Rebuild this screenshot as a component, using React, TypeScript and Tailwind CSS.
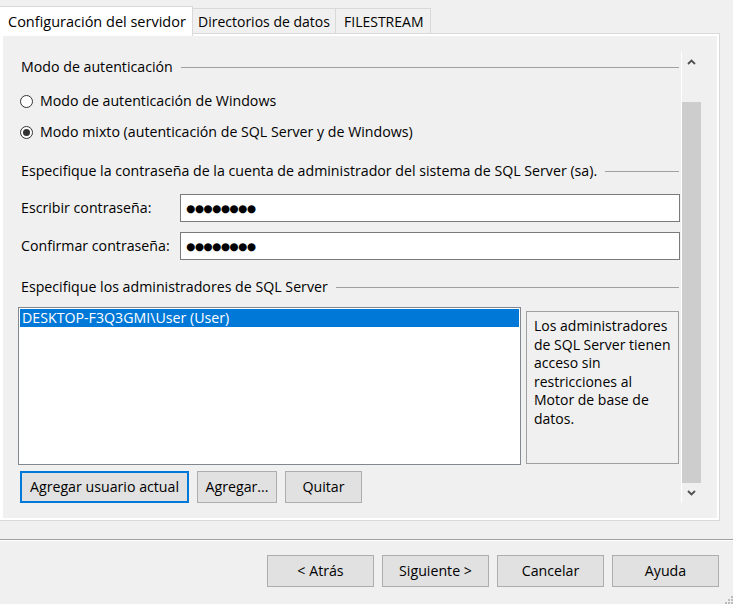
import React from 'react';

const font = { fontFamily: '"Open Sans", "Noto Sans", sans-serif' };

const Radio = ({ checked, label }: { checked?: boolean; label: string }) => (
  <div className="flex items-center h-[20px] ml-[2px]">
    <span className="w-[13px] h-[13px] rounded-full border border-[#333333] bg-white flex items-center justify-center">
      {checked && <span className="w-[7px] h-[7px] rounded-full bg-[#333333]" />}
    </span>
    <span className="ml-[7px]">{label}</span>
  </div>
);

const GroupHeader = ({ text, className = '' }: { text: string; className?: string }) => (
  <div className={`flex items-center h-[20px] ml-[3px] ${className}`}>
    <span className="whitespace-nowrap">{text}</span>
    <span className="flex-1 h-px bg-[#a0a0a0] ml-[8px] mr-[2px]" />
  </div>
);

const PasswordRow = ({ label, className = '' }: { label: string; className?: string }) => (
  <div className={`flex items-center h-[28px] ${className}`}>
    <span className="w-[159px] ml-[3px]">{label}</span>
    <div className="flex-1 h-full mr-[1px] bg-white border border-[#7a7a7a] flex items-center pl-[5px]">
      <span className="text-[10.5px] tracking-[-0.5px] leading-none" style={{ fontFamily: '"DejaVu Sans", sans-serif' }}>
        ●●●●●●●●
      </span>
    </div>
  </div>
);

const Btn = ({ children, focused, className = '' }: { children: React.ReactNode; focused?: boolean; className?: string }) => (
  <button
    className={`h-[32px] bg-[#e1e1e1] flex items-center justify-center text-black ${
      focused ? 'border-2 border-[#0078d7]' : 'border border-[#adadad]'
    } ${className}`}
  >
    {children}
  </button>
);

export default function App() {
  return (
    <div className="w-[733px] h-[604px] bg-[#f0f0f0] text-[14.2px] text-black relative overflow-hidden" style={font}>
      {/* tabs */}
      <div className="flex items-end h-[36px] pt-[6px] relative z-10 text-[14.5px]">
        <div className="h-[30px] w-[193px] bg-white border-t border-r border-[#d9d9d9] flex items-center pl-[8px]">
          Configuración del servidor
        </div>
        <div className="h-[26px] w-[143px] mb-[2px] border-t border-r border-[#d9d9d9] flex items-center pl-[5px] text-[14px]">
          Directorios de datos
        </div>
        <div className="h-[26px] w-[95px] mb-[2px] border-t border-r border-[#d9d9d9] flex items-center pl-[8px] text-[14px]">
          FILESTREAM
        </div>
      </div>

      {/* tab panel */}
      <div className="-mt-[3px] w-[720px] h-[488px] bg-white border-t border-r border-b border-[#d9d9d9] p-[2px] pl-[3px]">
        <div className="h-full bg-[#f0f0f0] pt-[16px] pb-[15px] pr-[16px] flex">
          {/* scroll content */}
          <div className="flex-1 pl-[15px] overflow-hidden flex flex-col">
            <GroupHeader text="Modo de autenticación" className="mt-[5px]" />
            <div className="mt-[14px]">
              <Radio label="Modo de autenticación de Windows" />
            </div>
            <div className="mt-[11px]">
              <Radio checked label="Modo mixto (autenticación de SQL Server y de Windows)" />
            </div>
            <GroupHeader
              text="Especifique la contraseña de la cuenta de administrador del sistema de SQL Server (sa)."
              className="mt-[19px]"
            />
            <PasswordRow label="Escribir contraseña:" className="mt-[13px]" />
            <PasswordRow label="Confirmar contraseña:" className="mt-[10px]" />
            <GroupHeader text="Especifique los administradores de SQL Server" className="mt-[17px]" />

            <div className="flex mt-[10px] h-[158px]">
              <div className="w-[503px] h-full bg-white border border-[#828790] p-[1px]">
                <div className="h-[18px] bg-[#0078d7] text-white flex items-center pl-[2px] leading-none">
                  DESKTOP-F3Q3GMI\User (User)
                </div>
              </div>
              <div className="ml-[5px] mt-[4px] w-[153px] h-[153px] border border-[#a0a0a0] pl-[7px] pr-[6px] pt-[5px] leading-[18.6px] text-[14px]">
                Los administradores de SQL Server tienen acceso sin restricciones al Motor de base de datos.
              </div>
            </div>

            <div className="flex mt-[6px] ml-[2px] gap-[8px]">
              <Btn focused className="w-[169px]">Agregar usuario actual</Btn>
              <Btn className="w-[80px]">Agregar...</Btn>
              <Btn className="w-[77px]">Quitar</Btn>
            </div>
          </div>

          {/* scrollbar */}
          <div className="w-[20px] flex flex-col border-l border-white bg-[#f0f0f0]">
            <div className="h-[20px] flex items-center justify-center">
              <svg width="9" height="6" viewBox="0 0 9 6">
                <path d="M1 5 L4.5 1.5 L8 5" stroke="#505050" strokeWidth="1.8" fill="none" />
              </svg>
            </div>
            <div className="h-[30px]" />
            <div className="flex-1 bg-[#cdcdcd]" />
            <div className="h-[20px] flex items-center justify-center">
              <svg width="9" height="6" viewBox="0 0 9 6">
                <path d="M1 1 L4.5 4.5 L8 1" stroke="#505050" strokeWidth="1.8" fill="none" />
              </svg>
            </div>
          </div>
        </div>
      </div>

      {/* separator */}
      <div className="mt-[18px] h-px bg-[#a0a0a0]" />
      <div className="h-px bg-white" />

      {/* wizard buttons */}
      <div className="flex justify-end gap-[8px] pr-[14px] mt-[14px]">
        <Btn className="w-[107px]">&lt; Atrás</Btn>
        <Btn className="w-[107px]">Siguiente &gt;</Btn>
        <Btn className="w-[107px]">Cancelar</Btn>
        <Btn className="w-[107px]">Ayuda</Btn>
      </div>

      {/* size grip */}
      <svg className="absolute right-0 bottom-0" width="10" height="10" viewBox="0 0 10 10">
        <rect x="8" y="2" width="2" height="2" fill="#bcbcbc" />
        <rect x="5" y="5" width="2" height="2" fill="#bcbcbc" />
        <rect x="8" y="5" width="2" height="2" fill="#bcbcbc" />
        <rect x="2" y="8" width="2" height="2" fill="#bcbcbc" />
        <rect x="5" y="8" width="2" height="2" fill="#bcbcbc" />
        <rect x="8" y="8" width="2" height="2" fill="#bcbcbc" />
      </svg>
    </div>
  );
}
